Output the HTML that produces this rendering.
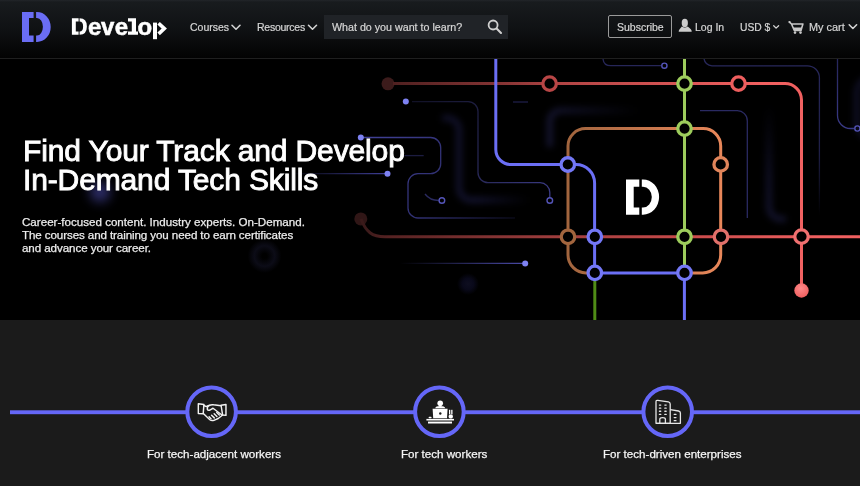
<!DOCTYPE html>
<html><head><meta charset="utf-8">
<style>
*{margin:0;padding:0;box-sizing:border-box}
html,body{width:860px;height:486px;overflow:hidden;background:#1b1b1b;font-family:"Liberation Sans",sans-serif}
#hdr{position:absolute;left:0;top:0;width:860px;height:58px;background:linear-gradient(#222529 0px,#181b1e 2px,#0f1113 30px,#030303 57px)}
#hline{position:absolute;left:0;top:58px;width:860px;height:1px;background:#1f1f1f}
#hero{position:absolute;left:0;top:59px;width:860px;height:261px;background:#000;overflow:hidden}
#bot{position:absolute;left:0;top:320px;width:860px;height:166px;background:#1b1b1b}
.t{position:absolute;white-space:nowrap;will-change:transform;color:#d6d6d6;font-size:10.5px;line-height:12px;-webkit-text-stroke:0.2px #d6d6d6}
svg{position:absolute;left:0;top:0}
</style></head><body>
<div id="hdr"></div>
<div id="hline"></div>
<div id="hero"></div>
<div id="bot"></div>

<!-- map -->
<svg width="860" height="486" viewBox="0 0 860 486" style="clip-path:inset(59px 0 166px 0)">
<defs>
 <linearGradient id="gRed1" gradientUnits="userSpaceOnUse" x1="390" y1="0" x2="760" y2="0">
  <stop offset="0" stop-color="#4e2020"/><stop offset="0.3" stop-color="#853434"/><stop offset="0.45" stop-color="#b04444"/><stop offset="1" stop-color="#f06060"/>
 </linearGradient>
 <linearGradient id="gRed2" gradientUnits="userSpaceOnUse" x1="365" y1="0" x2="820" y2="0">
  <stop offset="0" stop-color="#3a1a1a"/><stop offset="0.05" stop-color="#552222"/><stop offset="0.4" stop-color="#9c3c3c"/><stop offset="0.7" stop-color="#c84a4a"/><stop offset="1" stop-color="#f06060"/>
 </linearGradient>
 <linearGradient id="gOr" gradientUnits="userSpaceOnUse" x1="568" y1="0" x2="721" y2="0">
  <stop offset="0" stop-color="#a2653e"/><stop offset="1" stop-color="#e8875a"/>
 </linearGradient>
 <linearGradient id="gDimA" gradientUnits="userSpaceOnUse" x1="410" y1="100" x2="550" y2="200">
  <stop offset="0" stop-color="#101024"/><stop offset="0.5" stop-color="#24244e"/><stop offset="1" stop-color="#3c3c88"/>
 </linearGradient>
 <linearGradient id="gDimB" gradientUnits="userSpaceOnUse" x1="360" y1="137" x2="515" y2="218">
  <stop offset="0" stop-color="#42429a"/><stop offset="0.5" stop-color="#303072"/><stop offset="1" stop-color="#0a0a18"/>
 </linearGradient>
 <linearGradient id="gDimC" gradientUnits="userSpaceOnUse" x1="290" y1="0" x2="388" y2="0">
  <stop offset="0" stop-color="#000"/><stop offset="1" stop-color="#40409a"/>
 </linearGradient>
 <linearGradient id="gDimF" gradientUnits="userSpaceOnUse" x1="400" y1="0" x2="525" y2="0">
  <stop offset="0" stop-color="#000"/><stop offset="1" stop-color="#4a4aa8"/>
 </linearGradient>
 <linearGradient id="gDimH" gradientUnits="userSpaceOnUse" x1="0" y1="60" x2="0" y2="215">
  <stop offset="0" stop-color="#28285c"/><stop offset="0.6" stop-color="#1e1e46"/><stop offset="1" stop-color="#000"/>
 </linearGradient>
 <linearGradient id="gNavy1" gradientUnits="userSpaceOnUse" x1="440" y1="0" x2="530" y2="0">
  <stop offset="0" stop-color="#0e0e24"/><stop offset="0.4" stop-color="#12122c"/><stop offset="1" stop-color="#000"/>
 </linearGradient>
 <linearGradient id="gNavy2" gradientUnits="userSpaceOnUse" x1="545" y1="0" x2="640" y2="0">
  <stop offset="0" stop-color="#14142e"/><stop offset="1" stop-color="#000"/>
 </linearGradient>
 <filter id="blur3" color-interpolation-filters="sRGB" x="-50%" y="-50%" width="200%" height="200%"><feGaussianBlur stdDeviation="3"/></filter>
 <filter id="blur35" color-interpolation-filters="sRGB" x="-100%" y="-100%" width="300%" height="300%"><feGaussianBlur stdDeviation="4"/></filter>
 <radialGradient id="rgRing"><stop offset="0.15" stop-color="#000"/><stop offset="0.6" stop-color="#0c0c17"/><stop offset="1" stop-color="#000"/></radialGradient>
 <radialGradient id="rgDot"><stop offset="0" stop-color="#0e0e20"/><stop offset="0.5" stop-color="#09091a"/><stop offset="1" stop-color="#000"/></radialGradient>
 <linearGradient id="gNavy3" gradientUnits="userSpaceOnUse" x1="0" y1="105" x2="0" y2="220"><stop offset="0" stop-color="#000"/><stop offset="0.6" stop-color="#0e0e22"/><stop offset="1" stop-color="#12122a"/></linearGradient>
 <radialGradient id="rgRedDot" cx="0.45" cy="0.35" r="0.7"><stop offset="0" stop-color="#ff8a8a"/><stop offset="1" stop-color="#ee5c5c"/></radialGradient>
 <linearGradient id="gDimI" gradientUnits="userSpaceOnUse" x1="0" y1="58" x2="0" y2="130"><stop offset="0" stop-color="#26265a"/><stop offset="1" stop-color="#3a3a88"/></linearGradient>
 <filter id="blur2" color-interpolation-filters="sRGB" x="-100%" y="-100%" width="300%" height="300%"><feGaussianBlur stdDeviation="2"/></filter>
 <filter id="blur4" color-interpolation-filters="sRGB" x="-200%" y="-200%" width="500%" height="500%"><feGaussianBlur stdDeviation="6"/></filter>
</defs>
<!-- glows -->
<circle cx="100" cy="192" r="10" fill="#5050b8" filter="url(#blur4)" opacity="0.6"/>
<circle cx="264.5" cy="256" r="17" fill="url(#rgRing)"/>
<circle cx="468" cy="284" r="11" fill="url(#rgDot)"/>
<!-- blurred navy shapes -->
<g fill="none" stroke-width="6.5" filter="url(#blur3)">
 <path d="M442 118 H447 A12 12 0 0 1 459 130 V188 A12 12 0 0 0 471 200 H530" stroke="url(#gNavy1)"/>
 <path d="M549.8 147 V122 A11 11 0 0 1 561 110.5 H640" stroke="url(#gNavy2)"/>
 <path d="M872 78 A15 15 0 0 0 857 93 V122 A15 15 0 0 0 872 137" stroke="#0e0e22"/>
 <path d="M769 105 V207 A12 12 0 0 0 781 219 H786" stroke="url(#gNavy3)"/>
</g>
<!-- dim thin lines -->
<g fill="none" stroke-width="1.3">
 <path d="M412 101.6 H468 A10 10 0 0 1 478 111.6 V172.6 A10 10 0 0 0 488 182.6 H540 A10 10 0 0 1 549.8 192.6 V197.5" stroke="url(#gDimA)"/>
 <path d="M361 137.5 H430.7 A10 10 0 0 1 440.7 147.5 V163.7 A10 10 0 0 1 430.7 173.7 H418 A10 10 0 0 0 408 183.7 V208 A10 10 0 0 0 418 218 H515" stroke="url(#gDimB)"/>
 <path d="M290 173.7 H387.5" stroke="url(#gDimC)"/>
 <path d="M404.5 155.6 H423.7" stroke="#1c1c40"/>
 <path d="M425 194 Q430 200.5 438.9 200.5" stroke="#2a2a60"/>
 <path d="M400 263.4 H525" stroke="url(#gDimF)"/>
 <path d="M603 58 Q603 65.7 611 65.7 H661" stroke="#262658"/>
 <path d="M704 58 A8 8 0 0 0 712 65.8 H807.4 A12 12 0 0 1 819.4 77.8 V215" stroke="url(#gDimH)"/>
 <path d="M837.5 58 V115.5 A13 13 0 0 0 850.5 128.5 H854" stroke="url(#gDimI)"/>
 <path d="M700 110.7 H737 A10 10 0 0 1 747.3 121 V218" stroke="#2a2a62"/>
 <path d="M513 102 H528" stroke="#1e1e48"/>
</g>
<g fill="none" stroke="#5454b8" stroke-width="1.4">
 <circle cx="549.8" cy="200.5" r="2.8"/>
 <circle cx="441.9" cy="200.5" r="2.8"/>
 <circle cx="664.4" cy="65.7" r="2.6"/>
 <circle cx="857.4" cy="128.5" r="2.6"/>
</g>
<g fill="#7e82f2">
 <circle cx="405.8" cy="101.6" r="3"/>
 <circle cx="360.8" cy="137.5" r="3"/>
 <circle cx="387.5" cy="173.7" r="3"/>
 <circle cx="525.2" cy="263.4" r="3"/>
</g>
<!-- dark red dots -->
<circle cx="388" cy="83.8" r="6.5" fill="#3c1b1b"/>
<circle cx="360.8" cy="218.9" r="6.5" fill="#301616"/>
<!-- bright lines -->
<g fill="none" stroke-width="3">
 <path d="M393 83.6 H785 A16.5 16.5 0 0 1 801.5 100 V290" stroke="url(#gRed1)"/>
 <path d="M801.5 100 V290" stroke="#f06262"/>
 <path d="M361 219 C366 232 372 236.8 385 236.8 H860" stroke="url(#gRed2)"/>
 <path d="M594.8 272.9 H586 A18 18 0 0 1 568 255 V146 A17.5 17.5 0 0 1 585.5 128.6 H703 A17.5 17.5 0 0 1 720.7 146 V255 A18 18 0 0 1 702.7 272.9 H684.4" stroke="url(#gOr)"/>
 <path d="M684.5 58 V265" stroke="#9dcc5c"/>
 <path d="M594.8 272.9 V320" stroke="#4f8c16"/>
 <path d="M495.8 58 V149.5 A15 15 0 0 0 510.8 164.5 H576 A18.6 18.6 0 0 1 594.6 183 V272.9 H684.4 V320" stroke="#6b6ff5"/>
</g>
<g fill="#000" stroke-width="3.3">
 <circle cx="549.6" cy="83.6" r="6.75" stroke="#b84646"/>
 <circle cx="684.5" cy="83.6" r="6.75" stroke="#9dcc5c"/>
 <circle cx="738.5" cy="83.6" r="6.75" stroke="#ee5e5e"/>
 <circle cx="684.5" cy="128.6" r="6.75" stroke="#9dcc5c"/>
 <circle cx="567.8" cy="164.5" r="6.75" stroke="#7478f6"/>
 <circle cx="720.7" cy="164.4" r="6.75" stroke="#e0845a"/>
 <circle cx="568" cy="236.8" r="6.75" stroke="#a2653e"/>
 <circle cx="594.8" cy="236.8" r="6.75" stroke="#7478f6"/>
 <circle cx="684.5" cy="236.8" r="6.75" stroke="#9dcc5c"/>
 <circle cx="721" cy="236.8" r="6.75" stroke="#e2706a"/>
 <circle cx="801.5" cy="236.6" r="6.75" stroke="#f07070"/>
 <circle cx="594.8" cy="272.9" r="6.75" stroke="#7478f6"/>
 <circle cx="684.5" cy="272.9" r="6.75" stroke="#7478f6"/>
</g>
<circle cx="801.5" cy="290.5" r="7.2" fill="url(#rgRedDot)"/>
<!-- D logo -->
<path fill="#fff" d="M626 179.4 H639.3 V186.7 H633.7 V207.5 H639.3 V214.7 H626 Z M641.8 179.4 H643 A16.1 17.65 0 0 1 643 214.7 H641.8 V207.5 H643 A8.8 10.4 0 0 0 643 186.7 H641.8 Z"/>
</svg>

<!-- header -->
<svg width="60" height="58" viewBox="0 0 60 58">
<path fill="#6a6df4" d="M22 12 H33.6 V18 H29 V35.6 H33.6 V42 H22 Z M36.1 12 H37 A13.7 15 0 0 1 37 42 H36.1 V35.6 H37 A5.9 8.8 0 0 0 37 18 H36.1 Z"/>
</svg>
<svg width="180" height="58" viewBox="0 0 180 58" style="will-change:transform">
<g fill="#ffffff">
 <path d="M71.9 18.3 H78.6 V21.4 H75.8 V31.5 H78.6 V34.7 H71.9 Z"/>
 <path d="M79.6 18.3 Q86.9 18.3 86.9 26.5 Q86.9 34.7 79.6 34.7 V31.5 Q83.1 31.5 83.1 26.5 Q83.1 21.4 79.6 21.4 Z"/>
 <path d="M128 18.3 H136 V31.5 H138 V34.7 H128 V31.5 H131.8 V21.4 H128 Z"/>
 <rect x="153" y="22.6" width="4" height="16.6"/>
</g>
<path d="M158.6 23.3 L164.3 28.6 L158.6 33.9" fill="none" stroke="#fff" stroke-width="3.6" stroke-linejoin="miter"/>
<g font-family="Liberation Sans" font-weight="bold" font-size="24" fill="#fff" stroke="#fff" stroke-width="0.5">
 <text x="88" y="34.6">e</text>
 <text x="101" y="34.6">v</text>
 <text x="114.8" y="34.6">e</text>
 <text x="137.6" y="34.6">o</text>
</g>
</svg>
<div class="t" style="left:189.5px;top:21px">Courses</div>
<div class="t" style="left:257px;top:21px;letter-spacing:-0.25px">Resources</div>
<div style="position:absolute;left:324px;top:15px;width:183.5px;height:23.8px;background:#202327"></div>
<div class="t" style="left:332px;top:21px;font-size:10.7px">What do you want to learn?</div>
<div style="position:absolute;left:608px;top:15px;width:64px;height:23px;border:1px solid #9a9a9a;border-radius:2px"></div>
<div class="t" style="left:617px;top:20.5px">Subscribe</div>
<div class="t" style="left:695px;top:21px">Log In</div>
<div class="t" style="left:740.3px;top:21.5px;font-size:10.3px">USD $</div>
<div class="t" style="left:808.5px;top:21px;font-size:10.9px">My cart</div>


<!-- header icons -->
<svg width="860" height="58" viewBox="0 0 860 58">
<g fill="none" stroke="#d4d4d4" stroke-width="1.6" stroke-linecap="round" stroke-linejoin="round">
 <path d="M232 25.3 L236 29.2 L240 25.3"/>
 <path d="M308.5 25.3 L312.5 29.2 L316.5 25.3"/>
 <path d="M849.2 24.8 L852.9 28.5 L856.6 24.8"/>
 <path d="M773.7 25.7 L776.1 28.1 L778.6 25.7" stroke-width="1.3"/>
</g>
<g fill="none" stroke="#cfcfcf" stroke-linecap="round">
 <circle cx="493.1" cy="25" r="4.5" stroke-width="1.8"/>
 <path d="M496.6 28.6 L501 33" stroke-width="2.1"/>
</g>
<g fill="#cccccc">
 <ellipse cx="684.8" cy="22.9" rx="3.1" ry="4.2"/>
 <path d="M681.8 26.6 Q684.8 28.6 687.8 26.6 L690.6 29 Q691.8 30.2 691.7 31.8 L678.7 31.8 Q678.6 30.2 679.8 29 Z"/>
</g>
<g fill="none" stroke="#c8c8c8" stroke-width="1.6" stroke-linejoin="round" stroke-linecap="round">
 <path d="M789.3 22 L791.4 23.8 L794.3 30.5 L801 30.5 L802.9 24 L791.8 24"/>
</g>
<path d="M793 27.6 H802 L801 30.5 H794.3 Z" fill="#c8c8c8"/>
<circle cx="789.6" cy="22.1" r="1.1" fill="#c8c8c8"/>
<g fill="#c8c8c8">
 <circle cx="795" cy="32.6" r="1.3"/>
 <circle cx="800.5" cy="32.6" r="1.3"/>
</g>
</svg>

<!-- hero text -->
<div class="t" style="left:22.8px;top:136.3px;font-size:30px;line-height:29px;font-weight:normal;color:#fff;-webkit-text-stroke:0.9px #fff;letter-spacing:-0.13px">Find Your Track and Develop<br>In-Demand Tech Skills</div>
<div class="t" style="left:22px;top:214.8px;font-size:11.6px;line-height:13.1px;color:#ececec;-webkit-text-stroke:0.25px #ececec">Career-focused content. Industry experts. On-Demand.</div>
<div class="t" style="left:22px;top:227.9px;font-size:11.6px;line-height:13.1px;color:#ececec;-webkit-text-stroke:0.25px #ececec;letter-spacing:-0.1px">The courses and training you need to earn certificates</div>
<div class="t" style="left:22px;top:241px;font-size:11.6px;line-height:13.1px;color:#ececec;-webkit-text-stroke:0.25px #ececec;letter-spacing:-0.08px">and advance your career.</div>

<!-- bottom -->
<svg width="860" height="486" viewBox="0 0 860 486">
<rect x="10" y="410.3" width="850" height="3.9" fill="#6567f8"/>
<g fill="#1b1b1b" stroke="#6567f8" stroke-width="4">
 <circle cx="211.6" cy="411.8" r="24.3"/>
 <circle cx="439.4" cy="411.8" r="24.3"/>
 <circle cx="667.7" cy="411.8" r="24.3"/>
</g>

<!-- handshake -->
<g transform="translate(194 398) scale(0.0576)" fill="none" stroke="#f2f2f2" stroke-width="25" stroke-linejoin="round" stroke-linecap="round">
 <path d="M75 100 L172 114 L160 272 L75 268 Z"/>
 <path d="M470 126 L555 112 L555 302 L497 296 Z"/>
 <path d="M172 130 L215 150 Q235 140 260 130 Q300 110 340 118 L470 134"/>
 <path d="M262 128 Q225 150 232 200 Q245 228 290 200 L330 178 L480 290"/>
 <path d="M162 268 L275 378 Q305 400 345 388 L420 356 L497 296"/>
 <path d="M262 326 L296 360"/>
 <path d="M305 298 L352 345"/>
 <path d="M350 272 L398 320"/>
 <path d="M395 250 L440 296"/>
</g>
<!-- worker -->
<g fill="#ffffff">
 <circle cx="440.2" cy="403.2" r="2.8"/>
 <path d="M435.2 408.2 Q435.6 406 440.2 406 Q444.8 406 445.2 408.2 Z"/>
 <path d="M432.6 408.8 H447.6 L447 418.2 H433.2 Z"/>
 <rect x="449" y="409.8" width="1.3" height="4.6"/>
 <rect x="451.2" y="409.8" width="1.3" height="4.6"/>
 <rect x="448.6" y="414.6" width="4.3" height="3.8" rx="1.6"/>
 <rect x="428.6" y="416.8" width="3" height="1.5" rx="0.7"/>
 <rect x="426.4" y="418.9" width="27.6" height="1.6"/>
 <rect x="428" y="421.6" width="24" height="1.9"/>
</g>
<circle cx="440.3" cy="413.5" r="1.2" fill="#1b1b1b"/>

<!-- building -->
<g fill="none" stroke="#e6e6e6" stroke-width="1.3" stroke-linejoin="round">
 <path d="M670.2 423.3 V404 Q670.2 402.2 668.4 401.9 L657.8 400.3 Q656 400.1 656 401.9 V423.3 Z"/>
 <path d="M670.2 409.6 L678.6 411 Q680.4 411.3 680.4 413.1 V423.3 H656"/>
 <path d="M659.8 423.3 V419.3 Q659.8 417.6 662.6 417.6 Q665.4 417.6 665.4 419.3 V423.3"/>
</g>
<g fill="#e6e6e6">
 <rect x="658.8" y="404.4" width="2.6" height="1.3" rx="0.6"/>
 <rect x="664.2" y="404.4" width="2.6" height="1.3" rx="0.6"/>
 <rect x="658.8" y="407.5" width="2.6" height="1.3" rx="0.6"/>
 <rect x="664.2" y="407.5" width="2.6" height="1.3" rx="0.6"/>
 <rect x="658.8" y="410.6" width="2.6" height="1.3" rx="0.6"/>
 <rect x="664.2" y="410.6" width="2.6" height="1.3" rx="0.6"/>
 <rect x="658.8" y="413.7" width="2.6" height="1.3" rx="0.6"/>
 <rect x="664.2" y="413.7" width="2.6" height="1.3" rx="0.6"/>
 <rect x="673.6" y="413.8" width="3" height="1.3" rx="0.6"/>
 <rect x="673.6" y="416.9" width="3" height="1.3" rx="0.6"/>
 <rect x="673.6" y="420" width="3" height="1.3" rx="0.6"/>
</g>
</svg>
<div class="t" style="left:146.5px;top:447.5px;font-size:11.6px;color:#f6f6f6;-webkit-text-stroke:0.25px #f6f6f6">For tech-adjacent workers</div>
<div class="t" style="left:401px;top:447.5px;font-size:11.6px;color:#f6f6f6;-webkit-text-stroke:0.25px #f6f6f6">For tech workers</div>
<div class="t" style="left:603px;top:447.5px;font-size:11.6px;color:#f6f6f6;-webkit-text-stroke:0.25px #f6f6f6">For tech-driven enterprises</div>
</body></html>
